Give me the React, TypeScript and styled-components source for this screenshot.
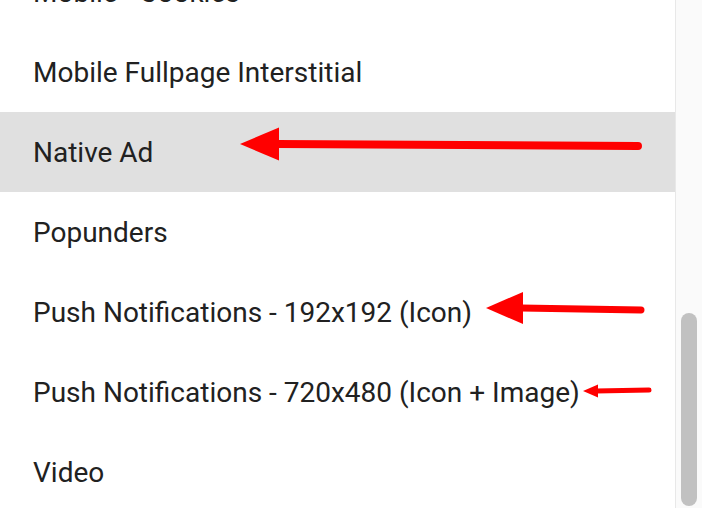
import React from 'react';
import styled, { createGlobalStyle } from 'styled-components';

const GlobalStyle = createGlobalStyle`
  html, body {
    margin: 0;
    padding: 0;
    background: #fff;
  }
  body {
    font-family: Roboto, "Noto Sans", sans-serif;
  }
`;

const Frame = styled.div`
  position: relative;
  width: 702px;
  height: 508px;
  display: flex;
  overflow: hidden;
  background: #fff;
`;

const ListViewport = styled.div`
  flex: 1;
  overflow: hidden;
`;

const List = styled.ul`
  list-style: none;
  margin: -48px 0 0;
  padding: 0;
`;

const Item = styled.li<{ $active?: boolean }>`
  height: 80px;
  display: flex;
  align-items: center;
  padding-left: 33px;
  font-size: 28px;
  color: #212121;
  background: ${(p) => (p.$active ? '#e0e0e0' : 'transparent')};
  white-space: nowrap;
`;

const Track = styled.div`
  width: 25px;
  border-left: 1px solid #e8e8e8;
  background: #fafafa;
  display: flex;
  flex-direction: column;
  justify-content: flex-end;
  align-items: center;
  padding: 0 1px 2px 0;
`;

const Thumb = styled.div`
  width: 16px;
  height: 193px;
  border-radius: 8px;
  background: #c1c1c1;
`;

const Annotations = styled.svg`
  position: absolute;
  left: 0;
  top: 0;
  pointer-events: none;
`;

const items = [
  'Mobile - Cookies',
  'Mobile Fullpage Interstitial',
  'Native Ad',
  'Popunders',
  'Push Notifications - 192x192 (Icon)',
  'Push Notifications - 720x480 (Icon + Image)',
  'Video',
];

const arrows = [
  { tip: [240, 144], base: 279, half: 16.5, end: [638, 146], w: 8 },
  { tip: [486, 308], base: 523, half: 16, end: [641, 310], w: 7 },
  { tip: [583, 391], base: 598, half: 6.5, end: [649, 390], w: 5 },
];

export default function App() {
  return (
    <>
      <GlobalStyle />
      <Frame>
        <ListViewport>
          <List>
            {items.map((label) => (
              <Item key={label} $active={label === 'Native Ad'}>
                {label}
              </Item>
            ))}
          </List>
        </ListViewport>
        <Track>
          <Thumb />
        </Track>
        <Annotations width="702" height="508">
          {arrows.map((a, i) => (
            <g key={i} fill="#ff0000" stroke="#ff0000">
              <line
                x1={a.base - 2}
                y1={a.tip[1]}
                x2={a.end[0]}
                y2={a.end[1]}
                strokeWidth={a.w}
                strokeLinecap="round"
              />
              <polygon
                stroke="none"
                points={`${a.tip[0]},${a.tip[1]} ${a.base},${a.tip[1] - a.half} ${a.base},${a.tip[1] + a.half}`}
              />
            </g>
          ))}
        </Annotations>
      </Frame>
    </>
  );
}
